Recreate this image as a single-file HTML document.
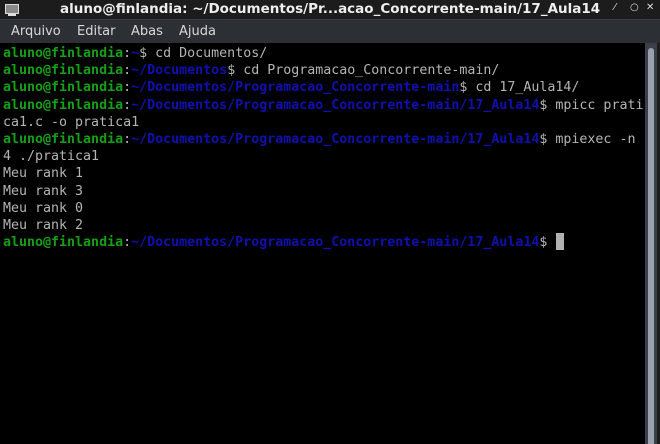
<!DOCTYPE html>
<html><head><meta charset="utf-8"><style>
html,body{margin:0;padding:0;width:660px;height:444px;overflow:hidden;background:#000;}
#title{position:absolute;left:0;top:0;width:660px;height:19px;background:#1c1c1c;color:#eee;font:bold 13.5px "DejaVu Sans","Liberation Sans",sans-serif;}
#title .t{position:absolute;left:60px;top:1px;white-space:nowrap;}
#title .ic{position:absolute;left:5px;top:4px;width:12px;height:8px;border:1px solid #ddd;background:#888;}
#title .ic2{position:absolute;left:8px;top:14px;width:8px;height:2px;background:#ddd;}
#title .b{position:absolute;top:2px;font-size:10px;font-weight:normal;color:#ddd;}
#menu{position:absolute;left:0;top:19px;width:660px;height:24px;background:#2c3035;color:#d8d8d8;font:13px "DejaVu Sans","Liberation Sans",sans-serif;border-top:1px solid #3a3e44;box-sizing:border-box;}
#menu span{position:absolute;top:4px;}
#term{position:absolute;left:0;top:43px;width:645px;height:401px;background:#000;}
pre{margin:0;position:absolute;left:3px;top:2px;font:13.3px/17.2px "DejaVu Sans Mono","Liberation Mono",monospace;color:#b4b4b4;}
.g{color:#15a015;font-weight:bold}.u{color:#1010b0;font-weight:bold}
#sb{position:absolute;left:645px;top:43px;width:12px;height:401px;background:#3a3f4a;}
#th{position:absolute;left:648px;top:48px;width:6px;height:396px;background:#9aa0ad;border-radius:3px 3px 0 0;}
#edge{position:absolute;left:657px;top:43px;width:3px;height:401px;background:#1c1c1c;}
#cur{position:absolute;left:556px;top:233px;width:8px;height:17px;background:#b0b0b0;}
</style></head><body>
<div id="title"><div class="ic"></div><div class="ic2"></div><div class="t">aluno@finlandia: ~/Documentos/Pr...acao_Concorrente-main/17_Aula14</div>
<span class="b" style="left:614px">⁄</span><span class="b" style="left:630px">○</span><span class="b" style="left:646px">✕</span></div>
<div id="menu"><span style="left:11px">Arquivo</span><span style="left:77px">Editar</span><span style="left:131px">Abas</span><span style="left:179px">Ajuda</span></div>
<div id="term"><pre><span class="g">aluno@finlandia</span>:<span class="u">~</span>$ cd Documentos/
<span class="g">aluno@finlandia</span>:<span class="u">~/Documentos</span>$ cd Programacao_Concorrente-main/
<span class="g">aluno@finlandia</span>:<span class="u">~/Documentos/Programacao_Concorrente-main</span>$ cd 17_Aula14/
<span class="g">aluno@finlandia</span>:<span class="u">~/Documentos/Programacao_Concorrente-main/17_Aula14</span>$ mpicc prati
ca1.c -o pratica1
<span class="g">aluno@finlandia</span>:<span class="u">~/Documentos/Programacao_Concorrente-main/17_Aula14</span>$ mpiexec -n
4 ./pratica1
Meu rank 1
Meu rank 3
Meu rank 0
Meu rank 2
<span class="g">aluno@finlandia</span>:<span class="u">~/Documentos/Programacao_Concorrente-main/17_Aula14</span>$ </pre></div>
<div id="cur"></div>
<div id="sb"></div><div id="th"></div><div id="edge"></div>
</body></html>
